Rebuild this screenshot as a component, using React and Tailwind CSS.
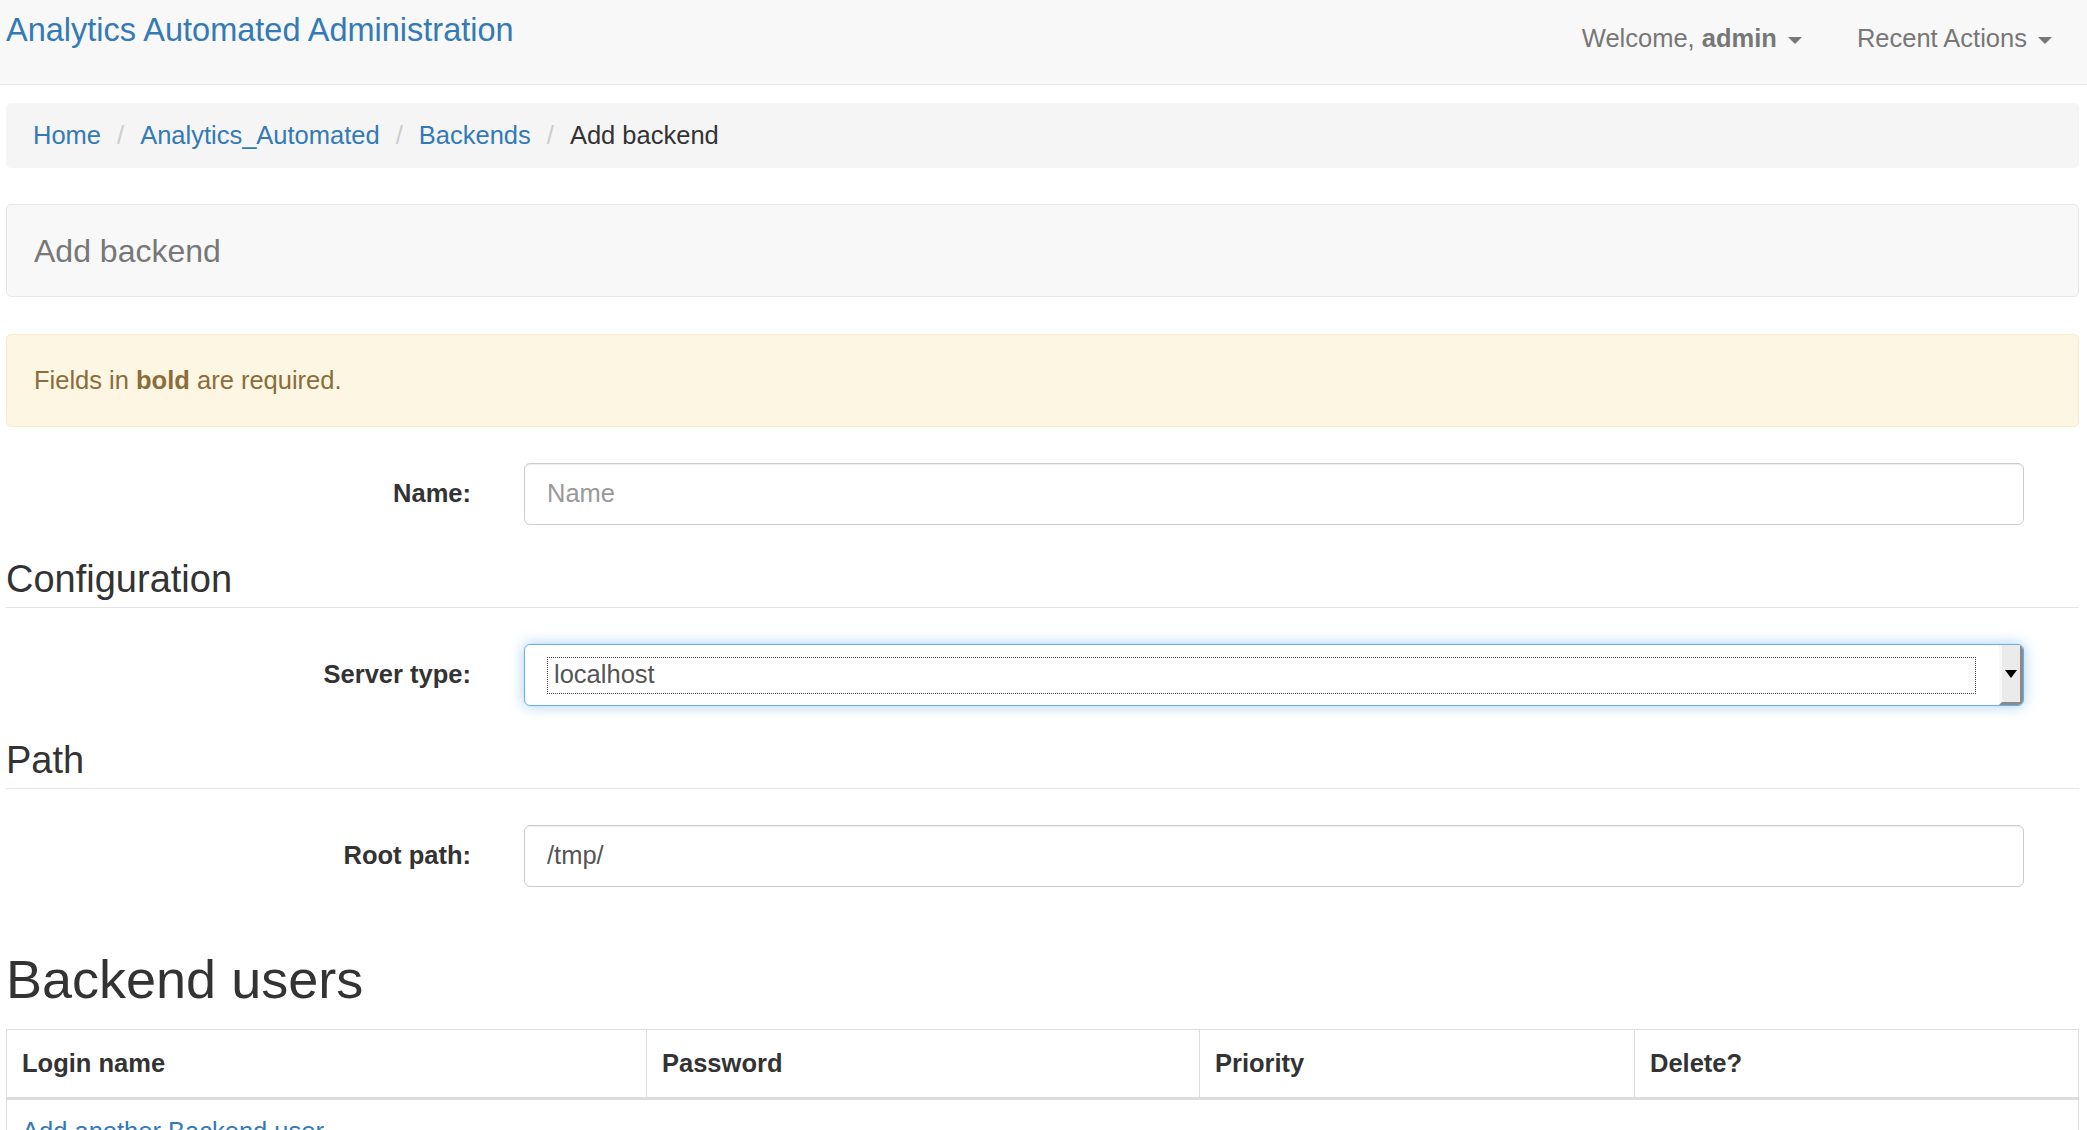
const Caret = () => (
  <span className="ml-[11px] inline-block h-0 w-0 border-x-[7px] border-t-[7px] border-x-transparent border-t-[#777] align-middle" />
);

const crumbs = ["Home", "Analytics_Automated", "Backends"];
const columns = [
  { name: "Login name", width: "w-[640px]" },
  { name: "Password", width: "w-[553px]" },
  { name: "Priority", width: "w-[435px]" },
  { name: "Delete?", width: "" },
];

const FormRow = ({ label, children }) => (
  <div className="flex items-center">
    <label className="mr-[53px] w-[465px] pb-[2px] text-right font-bold text-[#333]">{label}</label>
    {children}
  </div>
);

const TextInput = (props) => (
  <input
    type="text"
    className="h-[62px] w-[1500px] rounded-[6px] border border-[#ccc] bg-white px-[22px] pb-[2px] text-[#555] shadow-[inset_0_1px_1px_rgba(0,0,0,0.075)] outline-none placeholder:text-[#999]"
    {...props}
  />
);

const Legend = ({ children }) => (
  <h3 className="mb-[36px] flex h-[83px] items-end border-b border-[#e5e5e5] pb-[2px] text-[38px] leading-[52px] font-normal text-[#333]">
    {children}
  </h3>
);

export default function App() {
  return (
    <div className="h-[1130px] overflow-hidden bg-white font-['Liberation_Sans',Arial,sans-serif] text-[25.5px] leading-[36px] text-[#333]">
      {/* navbar */}
      <nav className="flex h-[85px] items-start justify-between border-b border-[#e7e7e7] bg-[#f8f8f8] pr-[35px] pl-[6px]">
        <a href="#" className="pt-[10px] text-[32.5px] leading-[40px] text-[#337ab7]">
          Analytics Automated Administration
        </a>
        <div className="flex gap-[55px] pt-[20px] text-[#777]">
          <a href="#">
            Welcome, <b>admin</b>
            <Caret />
          </a>
          <a href="#">
            Recent Actions
            <Caret />
          </a>
        </div>
      </nav>

      <main className="mr-[8px] ml-[6px]">
        {/* breadcrumb */}
        <ol className="mt-[18px] flex h-[65px] items-center rounded-[5px] bg-[#f5f5f5] px-[27px] pb-[2px]">
          {crumbs.map((crumb) => (
            <li key={crumb} className="flex">
              <a href="#" className="text-[#337ab7]">
                {crumb}
              </a>
              <span className="mx-[16px] text-[#ccc]">/</span>
            </li>
          ))}
          <li>Add backend</li>
        </ol>

        {/* page title */}
        <div className="mt-[36px] flex h-[93px] items-center rounded-[5px] border border-[#e7e7e7] bg-[#f8f8f8] px-[27px] text-[32px] text-[#777]">
          Add backend
        </div>

        {/* required fields note */}
        <div className="mt-[37px] flex h-[93px] items-center rounded-[5px] border border-[#faebcc] bg-[#fdf6e3] px-[27px] pb-[2px] text-[#8a6d3b]">
          <span>
            Fields in <b>bold</b> are required.
          </span>
        </div>

        <div className="mt-[36px]">
          <FormRow label="Name:">
            <TextInput placeholder="Name" />
          </FormRow>
        </div>

        <Legend>Configuration</Legend>
        <FormRow label="Server type:">
          <div className="flex h-[62px] w-[1500px] items-center overflow-hidden rounded-[6px] border border-[#66afe9] bg-white pl-[22px] text-[#555] shadow-[0_0_14px_rgba(102,175,233,0.6)]">
            <div className="flex h-[37px] w-[1429px] items-center border border-dotted border-[#444] pb-[2px] pl-[6px]">
              localhost
            </div>
            <div className="ml-auto flex h-full w-[24px] items-center justify-center border-r-[3px] border-b-[3px] border-l-[3px] border-r-[#8a8a8a] border-b-[#8a8a8a] border-l-[#f8f8f8] bg-[#ebebeb]">
              <span className="h-0 w-0 border-x-[6px] border-t-[8px] border-x-transparent border-t-black" />
            </div>
          </div>
        </FormRow>

        <Legend>Path</Legend>
        <FormRow label="Root path:">
          <TextInput defaultValue="/tmp/" />
        </FormRow>

        {/* inline users table */}
        <h1 className="mt-[57px] mb-[15px] text-[54px] leading-[70px] font-normal text-[#333]">
          Backend users
        </h1>
        <table className="w-full table-fixed border-collapse border border-[#ddd]">
          <thead>
            <tr>
              {columns.map((col) => (
                <th
                  key={col.name}
                  className={`${col.width} h-[69px] border border-b-[3px] border-[#ddd] px-[15px] pb-[2px] text-left font-bold`}
                >
                  {col.name}
                </th>
              ))}
            </tr>
          </thead>
          <tbody>
            <tr>
              <td colSpan={4} className="border border-[#ddd] px-[15px] py-[13px]">
                <a href="#" className="text-[#337ab7]">
                  Add another Backend user
                </a>
              </td>
            </tr>
          </tbody>
        </table>
      </main>
    </div>
  );
}
